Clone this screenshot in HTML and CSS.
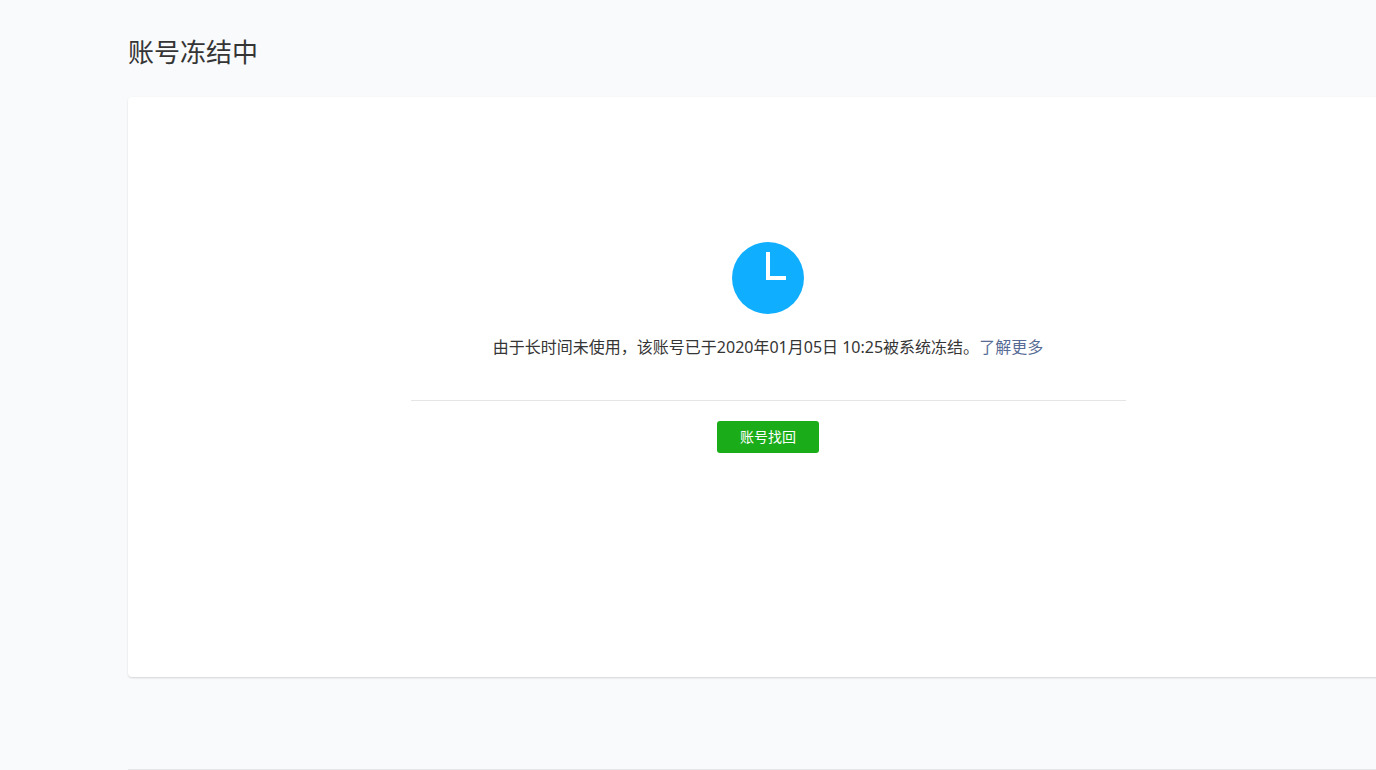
FILE: index.html
```html
<!DOCTYPE html>
<html lang="zh-CN">
<head>
<meta charset="utf-8">
<title>账号冻结中</title>
<link rel="stylesheet" href="styles.css">
</head>
<body>
<div class="page">
  <h1 class="title">账号冻结中</h1>
  <main class="card">
    <svg class="clock" viewBox="0 0 72 72" aria-hidden="true">
      <circle cx="36" cy="36" r="36" fill="#10aeff"/>
      <path d="M36 10v26h18" fill="none" stroke="#fff" stroke-width="4"/>
    </svg>
    <p class="message">由于长时间未使用，该账号已于2020年01月05日 10:25被系统冻结。<a class="link" href="#">了解更多</a></p>
    <div class="actions">
      <button class="button" type="button">账号找回</button>
    </div>
  </main>
  <footer class="footer"></footer>
</div>
</body>
</html>
```

FILE: styles.css
```css
body {
  margin: 0;
  background: #f8fafc;
  color: #353535;
  font-family: "Noto Sans", "Noto Sans CJK SC", sans-serif;
  font-size: 16px;
  line-height: 24px;
  overflow: hidden;
}

.page {
  margin-right: -32px;
  padding-left: 128px;
}

.title {
  margin: 0;
  padding: 32px 0 25px;
  font-size: 26px;
  font-weight: 400;
  line-height: 40px;
}

.card {
  display: flex;
  flex-direction: column;
  align-items: center;
  box-sizing: border-box;
  min-height: 580px;
  padding: 145px 20px 20px;
  border-radius: 4px;
  background: #fff;
  box-shadow: 0 1px 2px rgba(0, 0, 0, 0.15);
}

.clock {
  width: 72px;
  height: 72px;
}

.message {
  margin: 21px 0 41px;
}

.link {
  color: #576b95;
  text-decoration: none;
}

.actions {
  display: flex;
  justify-content: center;
  width: 100%;
  max-width: 715px;
  padding-top: 20px;
  border-top: 1px solid #e4e5e7;
}

.button {
  min-width: 102px;
  height: 32px;
  padding: 0 22px;
  border: 0;
  border-radius: 3px;
  background: #1aad19;
  color: #fff;
  font-family: inherit;
  font-size: 14px;
  line-height: 32px;
}

.footer {
  margin-top: 92px;
  border-top: 1px solid #e4e5e7;
}
```
